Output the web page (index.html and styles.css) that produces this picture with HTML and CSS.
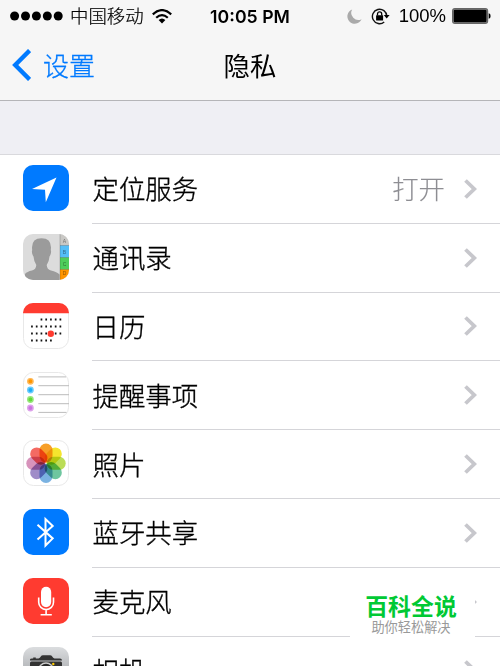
FILE: index.html
```html
<!DOCTYPE html>
<html lang="zh-CN">
<head>
<meta charset="utf-8">
<title>隐私</title>
<link rel="stylesheet" href="styles.css">
</head>
<body>
<div class="screen">
  <header class="top">
    <div class="status">
      <div class="status-left">
        <svg class="signal" width="53" height="10" viewBox="0 0 53 10"><circle cx="4.6" cy="5" r="4.5"/><circle cx="15.5" cy="5" r="4.5"/><circle cx="26.4" cy="5" r="4.5"/><circle cx="37.3" cy="5" r="4.5"/><circle cx="48.2" cy="5" r="4.5"/></svg>
        <span class="carrier">中国移动</span>
        <svg class="wifi" width="20" height="15" viewBox="0 0 20 15"><path d="M.8 5.4Q10-3.2 19.2 5.4M4.2 8.8Q10 3.5 15.8 8.8" fill="none" stroke="#000" stroke-width="2.2"/><path d="M6.6 11Q10 8 13.4 11L10 14.4Z"/></svg>
      </div>
      <div class="time">10:05 PM</div>
      <div class="status-right">
        <svg class="moon" width="15" height="15" viewBox="0 0 15 15"><path d="M5.2.4A7.4 7.4 0 1 0 14.6 10.2A7.1 7.1 0 0 1 5.2.4Z" fill="#aaa"/></svg>
        <svg class="lock" width="19" height="17" viewBox="0 0 19 17"><path d="M15.8 8.2A7.2 7.2 0 1 0 13.2 14" fill="none" stroke="#111" stroke-width="1.4"/><path d="M12.8 7H18.6L15.7 10.4Z"/><rect x="5.1" y="7.3" width="7" height="5.2" rx=".5"/><path d="M6.5 7.5V6A2.1 2.1 0 0 1 10.7 6V7.5" fill="none" stroke="#000" stroke-width="1.3"/></svg>
        <span class="percent">100%</span>
        <svg class="battery" width="39" height="16" viewBox="0 0 39 16"><rect x=".6" y=".6" width="35" height="14.8" rx="2.4" fill="#999" stroke="#666" stroke-width="1.2"/><rect x="1.7" y="1.8" width="32.8" height="12.4" rx="1.3"/><path d="M36.7 5.2Q38.6 5.5 38.6 8T36.7 10.8Z"/></svg>
      </div>
    </div>
    <nav class="nav">
      <a class="back"><svg width="20" height="32" viewBox="0 0 20 32"><path d="M18.6 1.5L4.2 16L18.6 30.5" fill="none" stroke="#007aff" stroke-width="4.4"/></svg><span>设置</span></a>
      <h1>隐私</h1>
      <span></span>
    </nav>
  </header>

  <main class="list">
    <div class="row">
      <svg class="icon" viewBox="0 0 46 46"><rect width="46" height="46" rx="10" fill="#007aff"/><path d="M33.5 12.5L9 24L22 24.7L22.8 37.3Z" fill="#fff"/></svg>
      <div class="cell"><span class="label">定位服务</span><span class="value">打开</span><svg class="chevron" viewBox="0 0 13 20"><path d="M1.5 1.5L10.3 10L1.5 18.5"/></svg></div>
    </div>
    <div class="row">
      <svg class="icon" viewBox="0 0 46 46">
        <clipPath id="tile"><rect width="46" height="46" rx="10"/></clipPath>
        <g clip-path="url(#tile)"><rect width="46" height="46" fill="#dcdcdc"/><path d="M2 46V40Q4 37.5 9 36.5Q13 35.5 13.3 31Q11 28 10.5 22.5Q8.2 19 9.2 16Q7.7 4.3 18.5 4.2Q29.3 4.3 27.8 16Q28.8 19 26.5 22.5Q26 28 23.7 31Q24 35.5 28 36.5Q34 38 36.5 40.5V46Z" fill="#9b9b9b"/><rect x="37" width="9" height="11.5" fill="#c9c8c5"/><rect x="37" y="11.5" width="9" height="12" fill="#54bef8"/><rect x="37" y="23.5" width="9" height="12" fill="#4fce5b"/><rect x="37" y="35.5" width="9" height="10.5" fill="#ff9500"/><path d="M37 11.5H46M37 23.5H46M37 35.5H46M37 0V46" stroke="#0004" stroke-width=".7"/></g>
        <g class="tabs"><text x="41.5" y="9.2">A</text><text x="41.5" y="19.5">B</text><text x="41.5" y="31.5">C</text><text x="41.5" y="41">D</text></g>
      </svg>
      <div class="cell"><span class="label">通讯录</span><svg class="chevron" viewBox="0 0 13 20"><path d="M1.5 1.5L10.3 10L1.5 18.5"/></svg></div>
    </div>
    <div class="row">
      <svg class="icon" viewBox="0 0 46 46"><rect x=".5" y=".5" width="45" height="45" rx="10" fill="#fff" stroke="#e8e8e8"/><path d="M0 10.3V10A10 10 0 0 1 10 0H36A10 10 0 0 1 46 10V10.3Z" fill="#ff3b30"/><g stroke="#111" stroke-width="1.9" stroke-dasharray="1.7 3.04"><path d="M17.6 16.5H38.8"/><path d="M8.1 23.5H38.8"/><path d="M8.1 30.5H38.8"/><path d="M8.1 37.5H29.3"/></g><circle cx="27.8" cy="30.7" r="3.2" fill="#ff3b30"/></svg>
      <div class="cell"><span class="label">日历</span><svg class="chevron" viewBox="0 0 13 20"><path d="M1.5 1.5L10.3 10L1.5 18.5"/></svg></div>
    </div>
    <div class="row">
      <svg class="icon" viewBox="0 0 46 46"><rect x=".5" y=".5" width="45" height="45" rx="10" fill="#fff" stroke="#e8e8e8"/><path d="M15.3 4.9H43M15.3 13.7H46M15.3 22.7H46M15.3 31.7H46M15.3 40.4H43.5" stroke="#bcbcbc"/><g stroke-width="1.4"><circle cx="7.4" cy="9.3" r="2.7" fill="#ff9500" stroke="#ffba5b"/><circle cx="7.4" cy="18" r="2.7" fill="#1badf8" stroke="#6accfc"/><circle cx="7.4" cy="27.5" r="2.7" fill="#63da38" stroke="#98e77c"/><circle cx="7.4" cy="36" r="2.7" fill="#cc73e1" stroke="#dda2eb"/></g></svg>
      <div class="cell"><span class="label">提醒事项</span><svg class="chevron" viewBox="0 0 13 20"><path d="M1.5 1.5L10.3 10L1.5 18.5"/></svg></div>
    </div>
    <div class="row">
      <svg class="icon" viewBox="0 0 46 46"><rect x=".5" y=".5" width="45" height="45" rx="10" fill="#fff" stroke="#e8e8e8"/>
        <g class="petals" transform="translate(23 23.3)"><rect x="-6.5" y="-19.7" width="13" height="19" rx="6.5" fill="#f79a1c"/><rect x="-6.5" y="-19.7" width="13" height="19" rx="6.5" fill="#f5e422" transform="rotate(45)"/><rect x="-6.5" y="-19.7" width="13" height="19" rx="6.5" fill="#b8db4e" transform="rotate(90)"/><rect x="-6.5" y="-19.7" width="13" height="19" rx="6.5" fill="#66c39a" transform="rotate(135)"/><rect x="-6.5" y="-19.7" width="13" height="19" rx="6.5" fill="#73aee0" transform="rotate(180)"/><rect x="-6.5" y="-19.7" width="13" height="19" rx="6.5" fill="#9a86c5" transform="rotate(225)"/><rect x="-6.5" y="-19.7" width="13" height="19" rx="6.5" fill="#d58db8" transform="rotate(270)"/><rect x="-6.5" y="-19.7" width="13" height="19" rx="6.5" fill="#f4625a" transform="rotate(315)"/></g></svg>
      <div class="cell"><span class="label">照片</span><svg class="chevron" viewBox="0 0 13 20"><path d="M1.5 1.5L10.3 10L1.5 18.5"/></svg></div>
    </div>
    <div class="row">
      <svg class="icon" viewBox="0 0 46 46"><rect width="46" height="46" rx="10" fill="#007aff"/><path d="M14.5 15.8L29.7 29.4L22.5 36.5V10L29.7 17L14.5 30.6" fill="none" stroke="#fff" stroke-width="2"/></svg>
      <div class="cell"><span class="label">蓝牙共享</span><svg class="chevron" viewBox="0 0 13 20"><path d="M1.5 1.5L10.3 10L1.5 18.5"/></svg></div>
    </div>
    <div class="row">
      <svg class="icon" viewBox="0 0 46 46"><rect width="46" height="46" rx="10" fill="#ff3b30"/><rect x="18" y="8.8" width="10.2" height="20.4" rx="5.1" fill="#fff"/><path d="M15.7 19.5V24.2A7.4 7.4 0 0 0 30.5 24.2V19.5M23.1 31.6V36.5M17.6 36.7H28.8" fill="none" stroke="#fff" stroke-width="1.6"/></svg>
      <div class="cell"><span class="label">麦克风</span><svg class="chevron" viewBox="0 0 13 20"><path d="M1.5 1.5L10.3 10L1.5 18.5"/></svg></div>
    </div>
    <div class="row">
      <svg class="icon" viewBox="0 0 46 46"><linearGradient id="silver" x2="0" y2="1"><stop stop-color="#dbdddf"/><stop offset="1" stop-color="#8b8d91"/></linearGradient><rect width="46" height="46" rx="10" fill="url(#silver)"/><path d="M7 13.4V12.5Q7 11.5 9 11.5H10.2V10.5H12.8V11.5H15.5Q17 11.2 17.8 9.5Q18.5 8.2 20 8.2H27Q28.5 8.2 29.2 9.5Q30 11.2 31.5 11.5H37Q39 11.5 39 13.4Z" fill="#333"/><rect x="7" y="14.5" width="32" height="21" rx="1.5" fill="#333"/><circle cx="23" cy="23.5" r="7.5" fill="#292929" stroke="#ccc" stroke-width="1.5"/><circle cx="30.3" cy="17" r="1.2" fill="#fc0"/></svg>
      <div class="cell"><span class="label">相机</span><svg class="chevron" viewBox="0 0 13 20"><path d="M1.5 1.5L10.3 10L1.5 18.5"/></svg></div>
    </div>
  </main>
  <aside class="badge"><strong>百科全说</strong><span>助你轻松解决</span></aside>
</div>
</body>
</html>
```
FILE: styles.css
```css
* { box-sizing: border-box; }
body {
  margin: 0;
  background: #efeff4;
  color: #000;
  font-family: "Liberation Sans", "Noto Sans CJK SC", sans-serif;
}
svg { display: block; flex: none; }
.screen { position: relative; height: 666px; overflow: hidden; }
.top {
  height: 101px;
  background: #f6f6f6;
  border-bottom: 1px solid #b5b5b8;
}
.status, .nav {
  display: grid;
  grid-template-columns: 1fr auto 1fr;
  align-items: center;
}
.status { height: 32px; padding: 0 9px 0 10px; }
.status-left, .status-right { display: flex; align-items: center; }
.status-right { justify-content: flex-end; }
.carrier {
  margin-left: 7px;
  padding-top: 2px;
  font-size: 18.4px;
  line-height: 30px;
  font-weight: 300;
  -webkit-text-stroke: .2px;
}
.wifi { margin-left: 8px; }
.time { margin-right: 1px; font-family: Inter, sans-serif; font-size: 17.7px; font-weight: 600; }
.moon { margin-right: 9px; }
.percent { margin: 0 6px 0 9px; font-size: 18.5px; }
.nav { height: 68px; padding: 0 13px 3px 11px; }
.back {
  display: flex;
  align-items: center;
  gap: 12px;
  color: #007aff;
  font-size: 26px;
  font-weight: 300;
  -webkit-text-stroke: .3px;
}
.nav h1 { margin: 0 0 0 2px; font-size: 26.4px; font-weight: 400; }
.list {
  margin-top: 53px;
  background: #fff;
  border-top: 1px solid #d9d9dd;
}
.row { display: flex; height: 68.8px; padding-left: 23px; }
.icon { width: 46px; height: 46px; margin-top: 10.2px; }
.cell {
  display: flex;
  flex: 1;
  align-items: center;
  margin-left: 23px;
  padding-right: 23px;
  border-bottom: 1px solid #d5d5d9;
}
.label, .value {
  padding-top: 3px;
  font-size: 26.4px;
  line-height: 40px;
  font-weight: 300;
  -webkit-text-stroke: .35px;
}
.label { margin-right: auto; padding-left: .5px; }
.value { color: #8e8e93; -webkit-text-stroke: .1px; }
.chevron { width: 13px; height: 20px; margin-left: 19px; }
.chevron path { fill: none; stroke: #c7c7cc; stroke-width: 3.8; }
.tabs { font-size: 5px; text-anchor: middle; fill: #0007; }
.petals { isolation: isolate; }
.petals rect { mix-blend-mode: multiply; opacity: .95; }
.badge {
  position: absolute;
  left: 350px;
  top: 590px;
  width: 125px;
  height: 60px;
  display: flex;
  flex-direction: column;
  align-items: center;
  padding: 4px 3px 0 0;
  background: #fff;
}
.badge strong { color: #00c934; font-size: 22.9px; line-height: 26px; font-weight: 700; }
.badge span { color: #999; font-size: 13.2px; line-height: 16px; }
```
